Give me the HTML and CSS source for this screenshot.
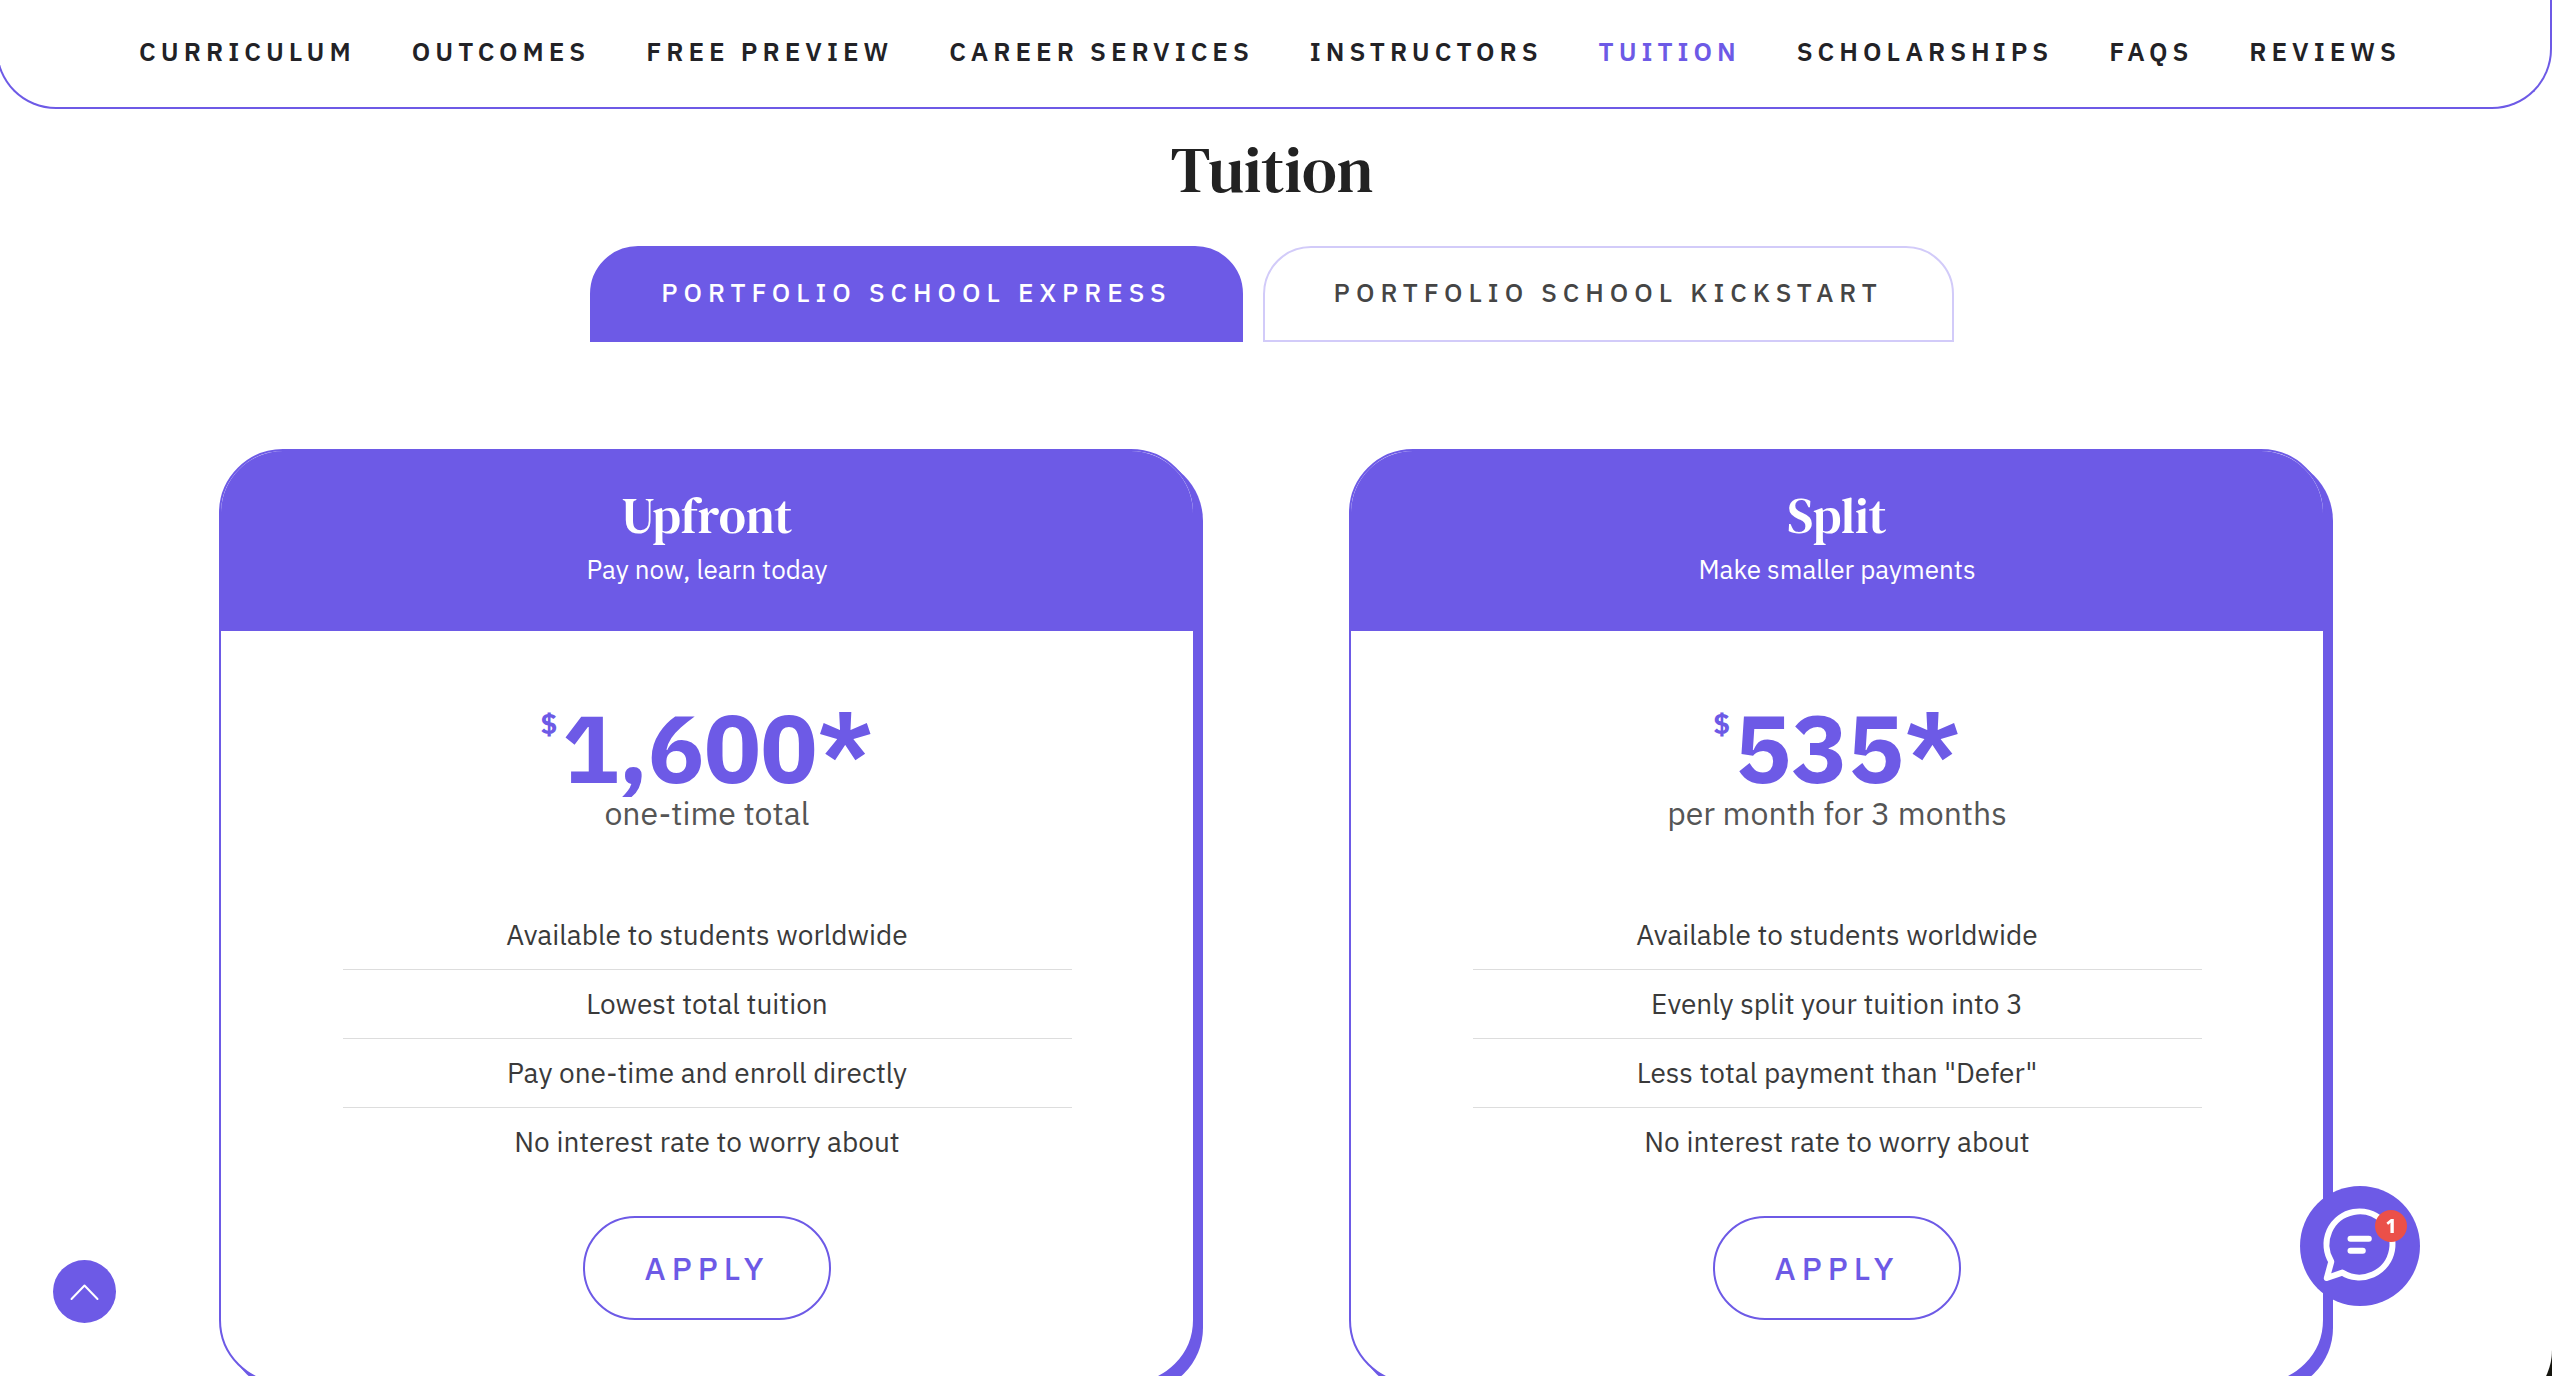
FILE: index.html
```html
<!DOCTYPE html>
<html lang="en">
<head>
<meta charset="utf-8">
<meta name="viewport" content="width=device-width, initial-scale=1">
<title>Tuition</title>
<link rel="stylesheet" href="styles.css">
</head>
<body>
<div class="page">
  <div class="sheet">
    <nav class="section-nav" aria-label="Sections">
      <a href="#curriculum">CURRICULUM</a>
      <a href="#outcomes">OUTCOMES</a>
      <a href="#preview">FREE PREVIEW</a>
      <a href="#career">CAREER SERVICES</a>
      <a href="#instructors">INSTRUCTORS</a>
      <a href="#tuition" class="current" aria-current="true">TUITION</a>
      <a href="#scholarships">SCHOLARSHIPS</a>
      <a href="#faqs">FAQS</a>
      <a href="#reviews">REVIEWS</a>
    </nav>

    <main class="tuition" id="tuition">
      <h1 class="title">Tuition</h1>

      <div class="tabs" role="tablist">
        <button class="tab tab-active" type="button" role="tab" aria-selected="true">PORTFOLIO SCHOOL EXPRESS</button>
        <button class="tab" type="button" role="tab" aria-selected="false">PORTFOLIO SCHOOL KICKSTART</button>
      </div>

      <div class="plans">
        <article class="plan">
          <header class="plan-head">
            <h2 class="plan-name">Upfront</h2>
            <p class="plan-tagline">Pay now, learn today</p>
          </header>
          <div class="plan-body">
            <p class="price"><span class="currency">$</span><span>1,600*</span></p>
            <p class="price-note">one-time total</p>
            <ul class="features">
              <li>Available to students worldwide</li>
              <li>Lowest total tuition</li>
              <li>Pay one-time and enroll directly</li>
              <li>No interest rate to worry about</li>
            </ul>
            <button class="apply" type="button">APPLY</button>
          </div>
        </article>

        <article class="plan">
          <header class="plan-head">
            <h2 class="plan-name">Split</h2>
            <p class="plan-tagline">Make smaller payments</p>
          </header>
          <div class="plan-body">
            <p class="price"><span class="currency">$</span><span>535*</span></p>
            <p class="price-note">per month for 3 months</p>
            <ul class="features">
              <li>Available to students worldwide</li>
              <li>Evenly split your tuition into 3</li>
              <li>Less total payment than "Defer"</li>
              <li>No interest rate to worry about</li>
            </ul>
            <button class="apply" type="button">APPLY</button>
          </div>
        </article>
      </div>
    </main>
  </div>
</div>

<button class="to-top" type="button" aria-label="Back to top">
  <svg viewBox="0 0 63 63" aria-hidden="true"><path d="M18.5 39 31.5 25.5 44.5 39"/></svg>
</button>

<button class="chat" type="button" aria-label="Open chat">
  <svg viewBox="0 0 120 120" aria-hidden="true">
    <path d="M42.3 86.6A33 33 0 1 0 31.3 75.6L26.8 92Z"/>
    <path d="M50.5 52.7H68.8M50.5 64.7H62.8"/>
  </svg>
  <span class="badge">1</span>
</button>
</body>
</html>
```
FILE: styles.css
```css
:root {
  --purple: #6d5ae6;
  --lavender: #d2cbf9;
  --sans: "IBM Plex Sans", "Noto Sans", sans-serif;
  --serif: "DM Serif Text", "Liberation Serif", serif;
}

* { box-sizing: border-box; }

body {
  margin: 0;
  background: #15150f;
  color: #3a3a3a;
  font-family: var(--sans);
}

h1, h2, p, ul { margin: 0; padding: 0; }

button {
  font-family: inherit;
  cursor: pointer;
}

.page {
  height: 100vh;
  overflow: hidden auto;
  scrollbar-width: none;
}

.sheet {
  background: #fff;
  border-bottom-right-radius: 60px;
  padding-bottom: 26px;
}

/* Section navigation */
.section-nav {
  display: flex;
  justify-content: center;
  gap: 56px;
  margin-left: -4px;
  padding: 34px 8px 39px 0;
  border: 2px solid var(--purple);
  border-top: 0;
  border-radius: 0 0 60px 60px;
}

.section-nav a {
  color: #222226;
  font-size: 26px;
  font-weight: 600;
  line-height: 34px;
  letter-spacing: 5px;
  white-space: nowrap;
  text-decoration: none;
}

.section-nav a.current { color: var(--purple); }

/* Tuition */
.tuition {
  display: flex;
  flex-direction: column;
  padding: 23px 8px 0 0;
}

.title {
  color: #222;
  font-family: var(--serif);
  font-size: 64px;
  font-weight: 400;
  line-height: 76px;
  text-align: center;
}

.tabs {
  display: flex;
  justify-content: center;
  gap: 20px;
  margin-top: 38px;
}

.tab {
  height: 96px;
  padding: 0 69px 4px;
  border: 2px solid var(--lavender);
  border-radius: 48px 48px 0 0;
  background: #fff;
  color: #454545;
  font-size: 26px;
  font-weight: 500;
  letter-spacing: 6px;
  white-space: nowrap;
}

.tab-active {
  border-color: var(--purple);
  background: var(--purple);
  color: #fff;
}

/* Plans */
.plans {
  display: grid;
  grid-template-columns: 1fr 1fr;
  gap: 154px;
  margin-top: 107px;
  padding: 0 219px;
}

.plan {
  border: 2px solid var(--purple);
  border-radius: 64px;
  background: #fff;
  box-shadow: 8px 8px 0 var(--purple);
  text-align: center;
}

.plan-head {
  padding: 35px 20px 45px;
  border-radius: 62px 62px 0 0;
  background: var(--purple);
  color: #fff;
}

.plan-name {
  font-family: var(--serif);
  font-size: 50px;
  font-weight: 400;
  line-height: 60px;
}

.plan-tagline {
  margin-top: 6px;
  font-size: 26px;
  line-height: 34px;
}

.plan-body {
  display: flex;
  flex-direction: column;
  align-items: center;
  padding: 71px 0 62px;
}

.price {
  display: flex;
  gap: 5px;
  color: var(--purple);
  font-size: 94px;
  font-weight: 700;
  line-height: 92px;
}

.currency {
  font-size: 28px;
  line-height: 44px;
}

.price-note {
  color: #555;
  font-size: 32px;
  line-height: 38px;
}

.features {
  width: 75%;
  margin-top: 69px;
  list-style: none;
}

.features li {
  font-size: 28px;
  line-height: 68px;
}

.features li:not(:last-child) { border-bottom: 1px solid #ddd; }

.apply {
  height: 104px;
  margin-top: 40px;
  padding: 0 60px;
  border: 2px solid var(--purple);
  border-radius: 52px;
  background: #fff;
  color: var(--purple);
  font-size: 32px;
  font-weight: 500;
  letter-spacing: 6px;
}

/* Floating controls */
.to-top,
.chat {
  position: fixed;
  padding: 0;
  border: 0;
  border-radius: 50%;
  background: var(--purple);
}

.to-top {
  bottom: 53px;
  left: 53px;
  width: 63px;
  height: 63px;
}

.chat {
  right: 132px;
  bottom: 70px;
  width: 120px;
  height: 120px;
}

.to-top svg,
.chat svg {
  display: block;
  fill: none;
  stroke: #fff;
  stroke-linecap: round;
  stroke-linejoin: round;
}

.to-top svg { stroke-width: 2; }
.chat svg { stroke-width: 6; }

.badge {
  position: absolute;
  top: 24px;
  left: 75px;
  width: 32px;
  height: 32px;
  border-radius: 50%;
  background: #eb5049;
  color: #fff;
  font: 800 19px/32px "Noto Sans", sans-serif;
  text-align: center;
}
```
